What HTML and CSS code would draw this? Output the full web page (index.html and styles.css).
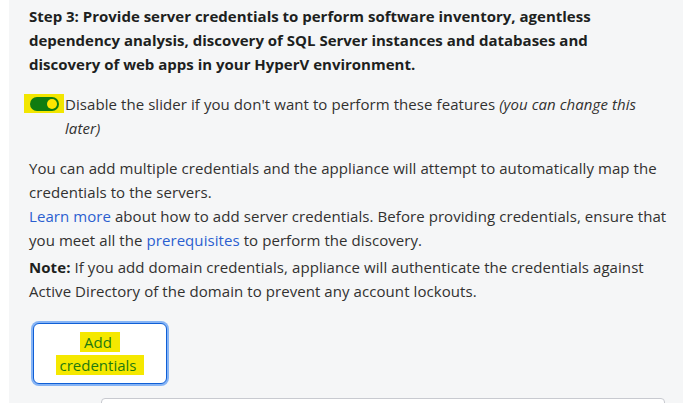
FILE: index.html
```html
<!DOCTYPE html>
<html>
<head>
<meta charset="utf-8">
<link rel="stylesheet" href="styles.css">
</head>
<body>
<div class="panel">
  <p class="step">Step 3: Provide server credentials to perform software inventory, agentless dependency analysis, discovery of SQL Server instances and databases and discovery of web apps in your HyperV environment.</p>
  <div class="toggle-row">
    <span class="toggle-hl"><span class="toggle"><span class="knob"></span></span></span>
    <span class="toggle-text">Disable the slider if you don't want to perform these features <em>(you can change this later)</em></span>
  </div>
  <p class="info">You can add multiple credentials and the appliance will attempt to automatically map the credentials to the servers.<br><a href="#" class="link">Learn more</a> about how to add server credentials. Before providing credentials, ensure that you meet all the <a href="#" class="link">prerequisites</a> to perform the discovery.</p>
  <p class="note"><strong>Note:</strong> If you add domain credentials, appliance will authenticate the credentials against Active Directory of the domain to prevent any account lockouts.</p>
  <button class="add-btn"><span class="hl">Add</span> <span class="hl">credentials</span></button>
  <div class="table-card"></div>
</div>
</body>
</html>
```

FILE: styles.css
```css
html, body {
  margin: 0;
  padding: 0;
  background: #ffffff;
}
body {
  font-family: "Open Sans", "Noto Sans", sans-serif;
  font-size: 15px;
  letter-spacing: 0.07px;
  color: #323130;
}
.panel {
  margin-left: 9px;
  width: 674px;
  height: 403px;
  box-sizing: border-box;
  padding: 4px 14px 0 20px;
  background: #f5f6f7;
  overflow: hidden;
}
.step {
  margin: 0;
  width: 580px;
  font-weight: 700;
  font-size: 15px;
  letter-spacing: 0;
  line-height: 24px;
  color: #201f1e;
}
.toggle-row {
  display: flex;
  align-items: flex-start;
  margin-top: 16px;
  line-height: 24px;
}
.toggle-hl {
  display: flex;
  align-items: center;
  justify-content: center;
  flex: none;
  width: 40px;
  height: 19px;
  margin: 2px 1px 0 -5px;
  background: #f2e600;
}
.toggle {
  display: flex;
  align-items: center;
  justify-content: flex-end;
  width: 29px;
  height: 14px;
  border-radius: 7px;
  background: #107c10;
  box-sizing: border-box;
  padding-right: 2px;
}
.knob {
  width: 10px;
  height: 10px;
  border-radius: 50%;
  background: #ffe600;
}
.toggle-text {
  max-width: 598px;
}
.toggle-text em {
  font-style: italic;
}
.info {
  margin: 16px 0 0 0;
  line-height: 24px;
}
.link {
  color: #2b5fd0;
  text-decoration: none;
}
.note {
  margin: 3px 0 0 0;
  width: 634px;
  line-height: 24px;
}
.note strong {
  font-weight: 700;
  color: #201f1e;
}
.add-btn {
  display: block;
  margin: 20px 0 0 4px;
  width: 134px;
  height: 61px;
  padding: 0 18px;
  background: #ffffff;
  border: 1px solid #0f5fd6;
  border-radius: 6px;
  box-shadow: 0 0 0 2px #86b4f5;
  font-family: "Open Sans", "Noto Sans", sans-serif;
  font-size: 15px;
  line-height: 23px;
  color: #1f7a10;
  text-align: center;
}
.hl {
  background: #f5e800;
  padding: 0 8px 0 4px;
}
.table-card {
  margin: 14px 0 0 72px;
  width: 562px;
  height: 40px;
  background: #ffffff;
  border: 1px solid #c8cad0;
  border-radius: 4px;
}
```
